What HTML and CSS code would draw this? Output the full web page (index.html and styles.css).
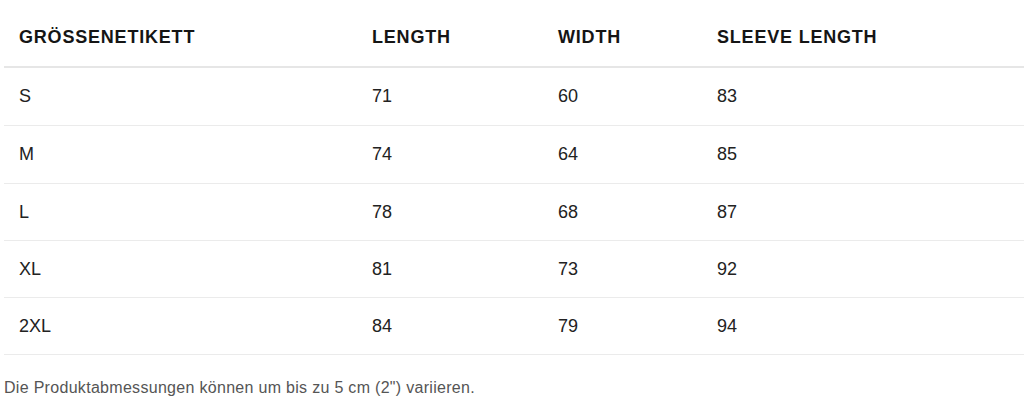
FILE: index.html
```html
<!DOCTYPE html>
<html lang="de">
<head>
<meta charset="utf-8">
<title>Größentabelle</title>
<link rel="stylesheet" href="styles.css">
</head>
<body>
<div class="wrap">
  <table class="sizes">
    <colgroup>
      <col class="c1"><col class="c2"><col class="c3"><col class="c4">
    </colgroup>
    <thead>
      <tr><th>GRÖSSENETIKETT</th><th>LENGTH</th><th>WIDTH</th><th>SLEEVE LENGTH</th></tr>
    </thead>
    <tbody>
      <tr><td>S</td><td>71</td><td>60</td><td>83</td></tr>
      <tr><td>M</td><td>74</td><td>64</td><td>85</td></tr>
      <tr><td>L</td><td>78</td><td>68</td><td>87</td></tr>
      <tr><td>XL</td><td>81</td><td>73</td><td>92</td></tr>
      <tr><td>2XL</td><td>84</td><td>79</td><td>94</td></tr>
    </tbody>
  </table>
  <p class="note">Die Produktabmessungen können um bis zu 5 cm (2") variieren.</p>
</div>
</body>
</html>
```

FILE: styles.css
```css
html, body {
  margin: 0;
  padding: 0;
  background: #ffffff;
}
body {
  font-family: "Liberation Sans", Arial, sans-serif;
  color: #222222;
}
.wrap {
  padding-left: 4px;
}
.sizes {
  width: 1020px;
  border-collapse: collapse;
  table-layout: fixed;
}
.c1 { width: 353px; }
.c2 { width: 186px; }
.c3 { width: 159px; }
.c4 { width: 322px; }
.sizes th {
  text-align: left;
  font-weight: bold;
  font-size: 18px;
  line-height: 24px;
  letter-spacing: 0.8px;
  color: #151515;
  padding: 25px 15px 17px;
  border-bottom: 2px solid #e6e6e6;
}
.sizes td {
  font-size: 18px;
  line-height: 24.25px;
  padding: 16px 15px;
  border-bottom: 1px solid #ebebeb;
  color: #222222;
}
.sizes tbody tr:first-child td {
  padding-bottom: 17px;
}
.note {
  margin: 22px 0 0;
  font-size: 16px;
  line-height: 21px;
  letter-spacing: 0.3px;
  color: #555555;
}
```
